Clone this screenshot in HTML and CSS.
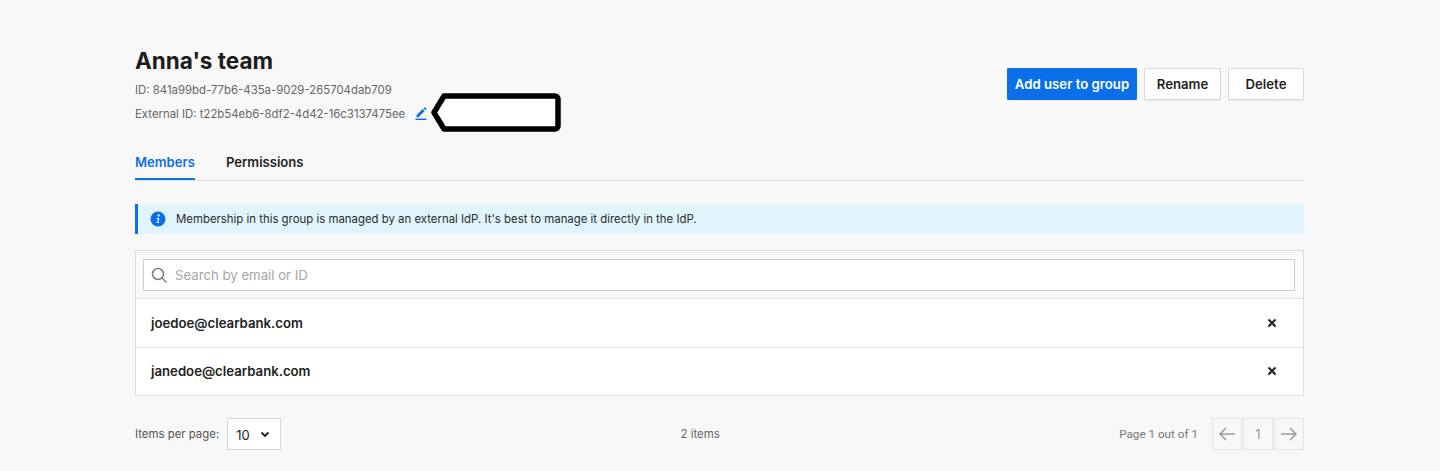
FILE: index.html
```html
<!DOCTYPE html>
<html lang="en">
<head>
<meta charset="utf-8">
<title>Anna's team</title>
<link rel="stylesheet" href="styles.css">
</head>
<body>
<main class="page">
  <header class="head">
    <div class="head-info">
      <h1 class="title">Anna's team</h1>
      <div class="meta meta-id">ID: 841a99bd-77b6-435a-9029-265704dab709</div>
      <div class="meta meta-ext">
        <span>External ID: t22b54eb6-8df2-4d42-16c3137475ee</span>
        <svg class="edit" width="12" height="14" viewBox="0 0 12 14"><path d="M1.500 8.200 7.600 2.100l2 2-6.100 6.100H1.500zM8.400 1.300 9.200.6a.7.7 0 0 1 1 0l.9.9a.7.7 0 0 1 0 1l-.7.8z" fill="#0a6fe8"/><rect x="0.500" y="11.600" width="11" height="1.400" fill="#0a6fe8"/></svg>
        <svg class="callout" width="130" height="39" viewBox="0 0 130 39"><path d="M13 3H124a3 3 0 0 1 3 3V33a3 3 0 0 1-3 3H13L3 19.500z" fill="#fff" stroke="#000" stroke-width="5.500" stroke-linejoin="round"/></svg>
      </div>
    </div>
    <div class="actions">
      <button class="btn btn-primary">Add user to group</button>
      <button class="btn btn-rename">Rename</button>
      <button class="btn btn-delete">Delete</button>
    </div>
  </header>

  <nav class="tabs">
    <span class="tab tab-active">Members</span>
    <span class="tab">Permissions</span>
  </nav>

  <div class="notice">
    <svg width="16" height="16" viewBox="0 0 16 16"><circle cx="8" cy="8" r="7.500" fill="#0a6fe8"/><circle cx="8.600" cy="4.500" r="1.150" fill="#fff"/><path d="M6.600 7h2.700L8.300 11.200h.9l-.2.900H6.300l.2-.9h.7l.7-3.300h-1.300z" fill="#fff"/></svg>
    <span>Membership in this group is managed by an external IdP. It's best to manage it directly in the IdP.</span>
  </div>

  <section class="list">
    <div class="search-row">
      <div class="search">
        <svg width="16" height="16" viewBox="0 0 16 16" fill="none" stroke="#7c7c7c" stroke-width="1.500"><circle cx="7" cy="7" r="5.500"/><path d="m11 11 4 4" stroke-linecap="round"/></svg>
        <span class="placeholder">Search by email or ID</span>
      </div>
    </div>
    <div class="row row-first">
      <span>joedoe@clearbank.com</span>
      <svg width="10" height="10" viewBox="0 0 10 10"><path d="m1.500 1.500 7 7m0-7-7 7" stroke="#1f1f1f" stroke-width="2"/></svg>
    </div>
    <div class="row">
      <span>janedoe@clearbank.com</span>
      <svg width="10" height="10" viewBox="0 0 10 10"><path d="m1.500 1.500 7 7m0-7-7 7" stroke="#1f1f1f" stroke-width="2"/></svg>
    </div>
  </section>

  <footer class="foot">
    <div class="foot-left">
      <span class="foot-text">Items per page:</span>
      <div class="select">
        <span>10</span>
        <svg width="10" height="7" viewBox="0 0 10 7" fill="none"><path d="m1.500 1.500 3.500 3.500 3.500-3.500" stroke="#1f1f1f" stroke-width="1.800"/></svg>
      </div>
    </div>
    <span class="foot-text foot-count">2 items</span>
    <div class="foot-right">
      <span class="page-label">Page 1 out of 1</span>
      <div class="pager">
        <span class="pager-cell"><svg width="18" height="14" viewBox="0 0 18 14" fill="none" stroke="#9a9a9a" stroke-width="1.500"><path d="M17 7H2M8 1 2 7l6 6"/></svg></span>
        <span class="pager-cell pager-num">1</span>
        <span class="pager-cell"><svg width="18" height="14" viewBox="0 0 18 14" fill="none" stroke="#9a9a9a" stroke-width="1.500"><path d="M1 7h15M10 1l6 6-6 6"/></svg></span>
      </div>
    </div>
  </footer>
</main>
</body>
</html>
```
FILE: styles.css
```css
* { box-sizing: border-box; }
html, body { margin: 0; height: 471px; overflow: hidden; }
body {
  background: #f8f8f8;
  font-family: Inter, "Liberation Sans", sans-serif;
  color: #1f1f1f;
}
.page { width: 1169px; margin-left: 135px; }

.head { display: flex; justify-content: space-between; align-items: flex-start; padding-top: 46px; height: 148px; }
.title { margin: 0; font-size: 22.500px; line-height: 29px; font-weight: 700; color: #1c1c1c; }
.meta { font-size: 11.380px; color: #666; line-height: 14px; }
.meta-id { margin-top: 8px; }
.meta-ext { margin-top: 10px; display: flex; align-items: center; height: 14px; }
.edit { margin-left: 10px; flex: none; }
.callout { margin-left: 4px; margin-top: -4px; flex: none; }

.actions { display: flex; padding-top: 22px; }
.btn {
  height: 32px;
  border: 1px solid #d8d8d8;
  border-radius: 1px;
  background: #fff;
  font: 600 13.200px Inter, "Liberation Sans", sans-serif;
  color: #1f1f1f;
  padding: 0;
  box-shadow: 0 1px 1px rgba(0,0,0,.06);
}
.btn-primary { width: 130px; background: #0a6fe8; border-color: #0a6fe8; color: #fff; }
.btn-rename { width: 77px; margin-left: 7px; }
.btn-delete { width: 76px; margin-left: 7px; }

.tabs { display: flex; gap: 31px; height: 33px; border-bottom: 1px solid #e0e0e0; }
.tab { font-size: 13.100px; font-weight: 600; line-height: 28px; height: 32px; color: #1f1f1f; }
.tab-active { color: #0a6fe8; border-bottom: 2px solid #0a6fe8; }

.notice {
  margin-top: 23px;
  height: 30px;
  background: #e0f4fc;
  border-left: 3px solid #0a6fe8;
  display: flex;
  align-items: center;
  gap: 10px;
  padding-left: 12px;
  font-size: 11.400px;
  color: #2b2b2b;
}
.notice svg { flex: none; }

.list { margin-top: 16px; border: 1px solid #dedede; background: #fff; }
.search-row { height: 47px; padding: 8px 8px 8px 7px; background: #f9f9f9; }
.search {
  height: 32px;
  border: 1px solid #cfcfcf;
  background: #fff;
  display: flex;
  align-items: center;
  gap: 8px;
  padding-left: 7px;
}
.placeholder { font-size: 13.200px; color: #a6a6a6; }
.row {
  height: 48px;
  border-top: 1px solid #e4e4e4;
  display: flex;
  align-items: center;
  justify-content: space-between;
  padding: 0 26px 1px 15px;
  font-size: 13.200px;
  font-weight: 600;
  color: #222;
}
.row-first { height: 49px; }

.foot { margin-top: 21px; display: flex; justify-content: space-between; align-items: flex-start; height: 33px; }
.foot-left { display: flex; align-items: center; gap: 8px; }
.foot-text { font-size: 11.400px; color: #555; line-height: 32px; padding-top: 1px; }
.foot-count { color: #666; }
.select {
  width: 54px;
  height: 32px;
  border: 1px solid #d8d8d8;
  background: #fff;
  display: flex;
  align-items: center;
  justify-content: space-between;
  padding: 2px 10px 0 8px;
  font-size: 13px;
}
.foot-right { display: flex; align-items: center; justify-content: flex-end; gap: 14px; }
.page-label { font-family: Roboto, "Liberation Sans", sans-serif; font-size: 11.700px; color: #777; line-height: 32px; padding-top: 1px; }
.pager { display: flex; gap: 1px; }
.pager-cell {
  width: 30px;
  height: 32px;
  background: #f8f8f8;
  border: 1px solid #e4e4e4;
  display: flex;
  align-items: center;
  justify-content: center;
  font-size: 13px;
  color: #9a9a9a;
}
```
